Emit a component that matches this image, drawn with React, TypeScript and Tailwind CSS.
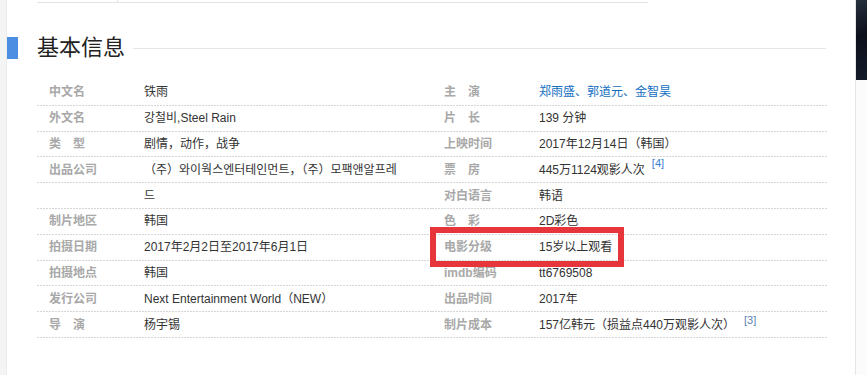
import React from 'react'

type Row = { label: string; value: React.ReactNode }

const leftRows: Row[] = [
    { label: '中文名', value: '铁雨' },
    { label: '外文名', value: '강철비,Steel Rain' },
    { label: '类\u3000型', value: '剧情，动作，战争' },
    { label: '出品公司', value: '（주）와이웍스엔터테인먼트，（주）모팩앤알프레' },
    { label: '', value: '드' },
    { label: '制片地区', value: '韩国' },
    { label: '拍摄日期', value: '2017年2月2日至2017年6月1日' },
    { label: '拍摄地点', value: '韩国' },
    { label: '发行公司', value: 'Next Entertainment World（NEW）' },
    { label: '导\u3000演', value: '杨宇锡' },
]

const rightRows: Row[] = [
    {
        label: '主\u3000演',
        value: <span className="text-[#136ec2]">郑雨盛、郭道元、金智昊</span>,
    },
    { label: '片\u3000长', value: '139 分钟' },
    { label: '上映时间', value: '2017年12月14日（韩国）' },
    {
        label: '票\u3000房',
        value: (
            <span className="flex items-start">
                445万1124观影人次
                <sup className="ml-[7px] -mt-[5px] text-[11px] leading-[11px] text-[#3a7fd0] top-0">[4]</sup>
            </span>
        ),
    },
    { label: '对白语言', value: '韩语' },
    { label: '色\u3000彩', value: '2D彩色' },
    { label: '电影分级', value: '15岁以上观看' },
    { label: 'imdb编码', value: 'tt6769508' },
    { label: '出品时间', value: '2017年' },
    {
        label: '制片成本',
        value: (
            <span className="flex items-start">
                157亿韩元（损益点440万观影人次）
                <sup className="ml-[9px] -mt-[3px] text-[11px] leading-[11px] text-[#5a7fb0] top-0">[3]</sup>
            </span>
        ),
    },
]

const InfoColumn = ({ rows }: { rows: Row[] }) => (
    <div className="w-[395px] flex flex-col">
        {rows.map((row, i) => (
            <div key={i} className="flex flex-col h-[25.8px]">
                <div className="flex items-center flex-1 text-[12px] leading-[14px]">
                    <span className="w-[107px] pl-[12px] shrink-0 font-bold text-[#a8a8a8] whitespace-pre">{row.label}</span>
                    <span className="text-[#333] whitespace-nowrap">{row.value}</span>
                </div>
                <div className="h-px bg-[repeating-linear-gradient(to_right,#d6d6d6_0,#d6d6d6_2px,transparent_2px,transparent_3px)]" />
            </div>
        ))}
    </div>
)

export default function App() {
    return (
        <div
            className="flex w-[867px] h-[375px] overflow-hidden bg-white"
            style={{ fontFamily: '"Liberation Sans", "Noto Sans CJK SC", "Noto Sans CJK KR", sans-serif' }}
        >
            {/* page gutter */}
            <div className="w-[7px] h-full bg-[#f4f4f4] border-r border-[#ececec]" />

            {/* main panel */}
            <div className="relative w-[849px] h-full border-r border-[#e4e4e4] bg-white">
                {/* remnant of the block above */}
                <div className="ml-[30px] w-[611px] h-[3px] flex border-b border-[#e3e3e3]">
                    <div className="w-[81px] h-full border-r border-[#e3e3e3]" />
                </div>

                {/* heading */}
                <div className="mt-[34px] flex items-center h-[22px]">
                    <div className="w-[11px] h-[22px] bg-[#4b8fe2]" />
                    <h2 className="ml-[19px] text-[22px] leading-[22px] text-[#222] font-normal">基本信息</h2>
                    <div className="flex-1 ml-[8px] mr-[29px] h-px bg-[#e6e6e6]" />
                </div>

                {/* basic info */}
                <div className="mt-[21px] ml-[30px] flex">
                    <InfoColumn rows={leftRows} />
                    <InfoColumn rows={rightRows} />
                </div>

                {/* red highlight */}
                <div className="absolute left-[423px] top-[227px] w-[194px] h-[40px] border-[6px] border-[#e7363b]" />
            </div>

            {/* side column */}
            <div className="flex-1 flex flex-col">
                <div className="h-[80px] bg-[linear-gradient(160deg,#27303d,#0b101b_45%,#141b29)]" />
                <div className="flex-1 bg-[#fbfbfb]" />
            </div>
        </div>
    )
}
